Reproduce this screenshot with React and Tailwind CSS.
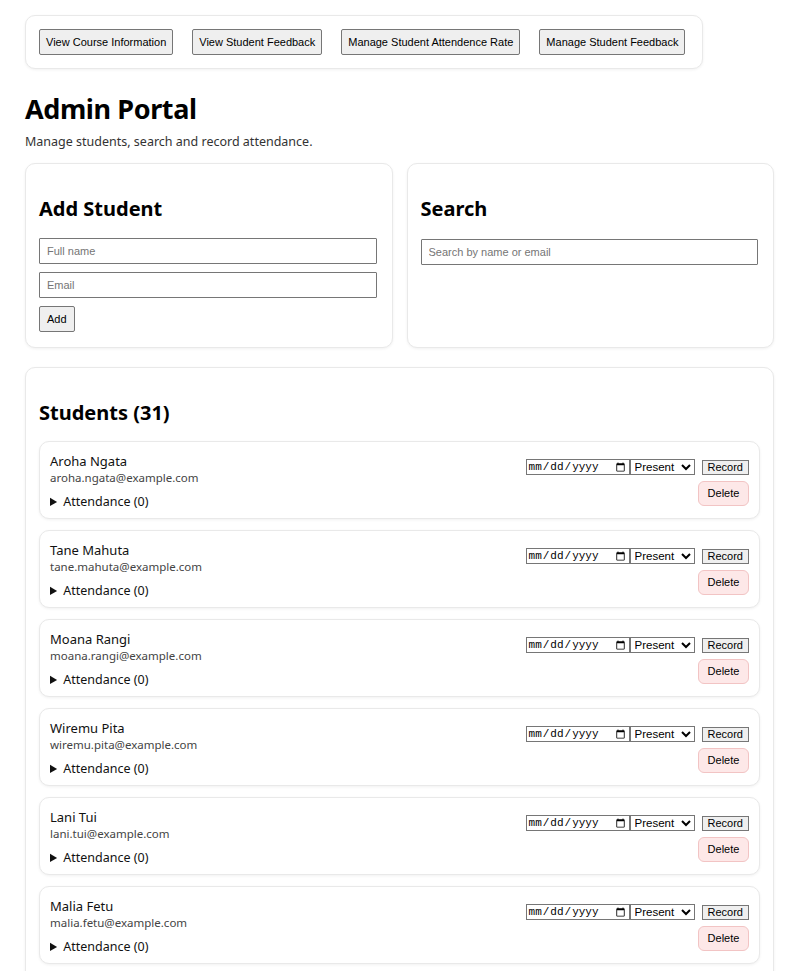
import React, { useState } from 'react';

const students = [
  ['Aroha Ngata', 'aroha.ngata@example.com'],
  ['Tane Mahuta', 'tane.mahuta@example.com'],
  ['Moana Rangi', 'moana.rangi@example.com'],
  ['Wiremu Pita', 'wiremu.pita@example.com'],
  ['Lani Tui', 'lani.tui@example.com'],
  ['Malia Fetu', 'malia.fetu@example.com'],
  ['Hemi Walker', 'hemi.walker@example.com'],
  ['Kiri Te Ao', 'kiri.teao@example.com'],
  ['Sione Latu', 'sione.latu@example.com'],
  ['Mere Tawhiri', 'mere.tawhiri@example.com'],
  ['Ana Vaifale', 'ana.vaifale@example.com'],
  ['Rawiri Hona', 'rawiri.hona@example.com'],
  ['Ngaio Parata', 'ngaio.parata@example.com'],
  ['Tevita Fonua', 'tevita.fonua@example.com'],
  ['Hine Rewi', 'hine.rewi@example.com'],
  ['Ari Tamihana', 'ari.tamihana@example.com'],
  ['Losa Aumua', 'losa.aumua@example.com'],
  ['Manaia Kereama', 'manaia.kereama@example.com'],
  ['Pania Tomoana', 'pania.tomoana@example.com'],
  ['Eru Mokena', 'eru.mokena@example.com'],
  ['Sina Faleolo', 'sina.faleolo@example.com'],
  ['Tama Harawira', 'tama.harawira@example.com'],
  ['Aperahama Rua', 'aperahama.rua@example.com'],
  ['Mele Taufa', 'mele.taufa@example.com'],
  ['Kahu Nikora', 'kahu.nikora@example.com'],
  ['Ruia Whaanga', 'ruia.whaanga@example.com'],
  ['Filipo Seiuli', 'filipo.seiuli@example.com'],
  ['Awhina Marino', 'awhina.marino@example.com'],
  ['Nikau Tipene', 'nikau.tipene@example.com'],
  ['Vailea Toleafoa', 'vailea.toleafoa@example.com'],
  ['Matiu Heke', 'matiu.heke@example.com'],
];

const btn = "h-[26px] px-[6px] bg-[#efefef] border border-[#767676] text-[11px] text-black font-['Liberation_Sans',Arial,sans-serif] rounded-[2px]";
const input = "h-[26px] w-full px-[7px] border border-[#767676] text-[11px] font-['Liberation_Sans',Arial,sans-serif] placeholder:text-[#757575] rounded-[1px]";
const card = "bg-white border border-[#e9e9e9] rounded-[10px] shadow-[0_1px_3px_rgba(0,0,0,0.06)]";

const StudentRow = ({ name, email }) => (
  <div className={`${card} flex justify-between px-[10px] pt-[10px] pb-[8px] h-[78px]`}>
    <div className="flex flex-col">
      <div className="text-[13px] leading-[18px] text-[#111]">{name}</div>
      <div className="text-[11.5px] leading-[16px] text-[#444]">{email}</div>
      <details className="mt-[7px] text-[12.5px] leading-[18px] text-[#111]">
        <summary className="cursor-pointer">Attendance (0)</summary>
      </details>
    </div>
    <div className="flex flex-col items-end pt-[7px]">
      <div className="flex items-center">
        <input type="date" className="h-[16px] w-[104px] border border-[#767676] text-[11px] font-['Liberation_Mono',monospace] px-[1px]" />
        <select className="h-[16px] w-[65px] border border-[#767676] text-[11.5px] font-['Liberation_Sans',Arial,sans-serif] bg-white">
          <option>Present</option>
          <option>Absent</option>
          <option>Late</option>
        </select>
        <button className="ml-[7px] h-[15px] px-[5px] bg-[#efefef] border border-[#767676] text-[11px] leading-[12px] font-['Liberation_Sans',Arial,sans-serif]">Record</button>
      </div>
      <button className="mt-[6px] h-[25px] w-[51px] bg-[#fde8e8] border border-[#f2c4c4] rounded-[6px] text-[11px] font-['Liberation_Sans',Arial,sans-serif]">Delete</button>
    </div>
  </div>
);

export default function App() {
  const [q, setQ] = useState('');
  return (
    <div className="min-h-screen bg-white pl-[25px] pr-[14px] pt-[15px] pb-[20px] font-['Noto_Sans',sans-serif] text-black">
      <div className={`${card} inline-flex gap-[19px] pl-[13px] pr-[17px] py-[13px]`}>
        <button className={btn}>View Course Information</button>
        <button className={btn}>View Student Feedback</button>
        <button className={btn}>Manage Student Attendence Rate</button>
        <button className={btn}>Manage Student Feedback</button>
      </div>

      <h1 className="mt-[23px] text-[27px] leading-[34px] font-bold tracking-[-0.4px]">Admin Portal</h1>
      <p className="mt-[7px] text-[12.5px] leading-[18px] text-[#333]">Manage students, search and record attendance.</p>

      <div className="mt-[12px] grid grid-cols-2 gap-[14px]">
        <div className={`${card} pl-[13px] pr-[15px] pt-[31px] pb-[15px]`}>
          <h2 className="text-[20px] leading-[28px] font-bold">Add Student</h2>
          <div className="mt-[15px] flex flex-col gap-[8px] items-start">
            <input className={input} placeholder="Full name" />
            <input className={input} placeholder="Email" />
            <button className={`${btn} h-[25px] px-[7px]`}>Add</button>
          </div>
        </div>
        <div className={`${card} pl-[13px] pr-[15px] pt-[31px] pb-[15px]`}>
          <h2 className="text-[20px] leading-[28px] font-bold">Search</h2>
          <div className="mt-[15px]">
            <input className={input} placeholder="Search by name or email" value={q} onChange={e => setQ(e.target.value)} />
          </div>
        </div>
      </div>

      <div className={`${card} mt-[19px] px-[13px] pt-[31px] pb-[14px]`}>
        <h2 className="text-[20px] leading-[28px] font-bold">Students (31)</h2>
        <div className="mt-[14px] flex flex-col gap-[11px]">
          {students.map(([n, e]) => <StudentRow key={e} name={n} email={e} />)}
        </div>
      </div>
    </div>
  );
}
